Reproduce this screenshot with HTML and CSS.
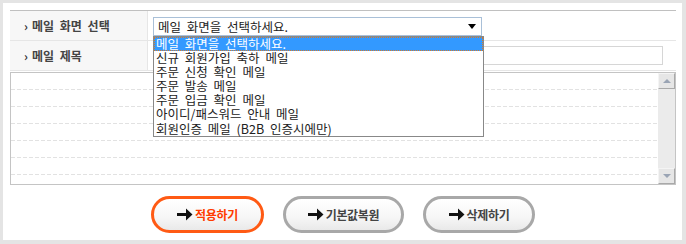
FILE: index.html
```html
<!DOCTYPE html>
<html>
<head>
<title>메일 설정</title>
<link rel="stylesheet" href="styles.css">
</head>
<body>

<div class="frame">
  <div class="form-grid">
    <div class="label"><span class="bullet">›</span>메일 화면 선택</div>
    <div class="value">
      <div class="select">
        <span class="select-text">메일 화면을 선택하세요.</span>
        <span class="select-arrow"></span>
        <ul class="select-list">
          <li class="active">메일 화면을 선택하세요.</li>
          <li>신규 회원가입 축하 메일</li>
          <li>주문 신청 확인 메일</li>
          <li>주문 발송 메일</li>
          <li>주문 입금 확인 메일</li>
          <li>아이디/패스워드 안내 메일</li>
          <li>회원인증 메일 (B2B 인증시에만)</li>
        </ul>
      </div>
    </div>
    <div class="label"><span class="bullet">›</span>메일 제목</div>
    <div class="value">
      <div class="subject"></div>
    </div>
  </div>

  <div class="mail-body">
    <div class="lines">
      <div class="line"></div>
      <div class="line"></div>
      <div class="line"></div>
      <div class="line"></div>
      <div class="line"></div>
      <div class="line"></div>
    </div>
    <div class="scrollbar">
      <div class="scroll-btn"><span class="tri up"></span></div>
      <div class="scroll-btn"><span class="tri down"></span></div>
    </div>
  </div>

  <div class="buttons">
    <div class="btn btn-apply">
      <svg class="arrow" width="16" height="13" viewBox="0 0 16 13"><path d="M0 5h9V0.5l6.5 6-6.5 6V8H0z" fill="#111"/></svg>
      <span>적용하기</span>
    </div>
    <div class="btn btn-reset">
      <svg class="arrow" width="16" height="13" viewBox="0 0 16 13"><path d="M0 5h9V0.5l6.5 6-6.5 6V8H0z" fill="#111"/></svg>
      <span>기본값복원</span>
    </div>
    <div class="btn btn-delete">
      <svg class="arrow" width="16" height="13" viewBox="0 0 16 13"><path d="M0 5h9V0.5l6.5 6-6.5 6V8H0z" fill="#111"/></svg>
      <span>삭제하기</span>
    </div>
  </div>
</div>

</body>
</html>
```

FILE: styles.css
```css
body {
  margin: 0;
  background: #e4e4e4;
  font-family: "Noto Sans CJK KR", "Noto Sans", sans-serif;
  font-size: 12px;
  word-spacing: 3px;
  color: #333;
}

/* white panel */
.frame {
  margin: 3px 4px 0 3px;
  height: 237px;
  background: #fff;
  padding: 7px 6px 0 7px;
  box-sizing: border-box;
}

/* form rows */
.form-grid {
  display: grid;
  grid-template-columns: 138px 1fr;
  border-top: 1px solid #c0c0c0;
}

.label {
  height: 29px;
  border-bottom: 1px solid #e6e6e6;
  border-right: 1px solid #e6e6e6;
  background: #f7f7f7;
  display: flex;
  align-items: center;
  padding-left: 14px;
  font-weight: bold;
  color: #444;
}

.bullet {
  width: 8px;
  font-size: 12px;
  color: #333;
}

.value {
  height: 29px;
  border-bottom: 1px solid #e6e6e6;
  display: flex;
  align-items: center;
  padding-left: 5px;
}

.select {
  position: relative;
  width: 329px;
  height: 19px;
  border: 1px solid #a9c0d8;
  box-sizing: border-box;
  display: flex;
  align-items: center;
  padding-left: 4px;
  margin-top: 1px;
  font-size: 12.5px;
}

.select-text {
  flex: 1;
  color: #222;
}

.select-arrow {
  width: 0;
  height: 0;
  border-left: 4px solid transparent;
  border-right: 4px solid transparent;
  border-top: 5px solid #000;
  margin-right: 5px;
}

/* opened dropdown list */
.select-list {
  position: absolute;
  left: -1px;
  top: 18px;
  width: 329px;
  margin: 0;
  padding: 0;
  list-style: none;
  background: #fff;
  border: 1px solid #888;
  z-index: 5;
}

.select-list li {
  height: 14.2px;
  line-height: 14.2px;
  padding-left: 2px;
  color: #222;
  white-space: nowrap;
}

.select-list li.active {
  background: #3399ff;
  color: #fff;
  outline: 1px dotted #d57a2a;
  outline-offset: -1px;
}

.subject {
  width: 510px;
  height: 19px;
  border: 1px solid #d6d6d6;
  box-sizing: border-box;
}

/* mail body editor */
.mail-body {
  margin-top: 1px;
  height: 113px;
  border: 1px solid #c4c4c4;
  box-sizing: border-box;
  display: flex;
}

.lines {
  flex: 1;
}

.line {
  height: 16px;
  border-bottom: 1px solid transparent;
  position: relative;
}

.line::after {
  content: "";
  position: absolute;
  left: 0;
  right: 0;
  bottom: -1px;
  height: 1px;
  background: repeating-linear-gradient(to right, #e2e2e2 0 4px, transparent 4px 6px);
}

.scrollbar {
  width: 17px;
  background: #ebebeb;
  display: flex;
  flex-direction: column;
  justify-content: space-between;
}

.scroll-btn {
  height: 16px;
  border: 1px solid;
  border-color: #f4f4f4 #a9a9a9 #a9a9a9 #f4f4f4;
  background: #e6e6e6;
  box-sizing: border-box;
  display: flex;
  align-items: center;
  justify-content: center;
}

.tri {
  width: 0;
  height: 0;
  border-left: 4px solid transparent;
  border-right: 4px solid transparent;
}

.tri.up {
  border-bottom: 4px solid #9aa4b4;
}

.tri.down {
  border-top: 4px solid #9aa4b4;
}

/* action buttons */
.buttons {
  display: flex;
  justify-content: center;
  gap: 19px;
  margin-top: 11px;
}

.btn {
  height: 37px;
  border: 3px solid #a8a8a8;
  border-radius: 19px;
  box-sizing: border-box;
  background: linear-gradient(#ffffff, #f6f6f6 60%, #e9e9e9);
  display: flex;
  align-items: center;
  justify-content: center;
  gap: 2px;
  font-weight: bold;
  color: #444;
  letter-spacing: -0.3px;
}

.btn-apply {
  width: 113px;
  border-color: #ff5a14;
  color: #ff3c00;
}

.btn-reset {
  width: 121px;
}

.btn-delete {
  width: 112px;
}

.arrow {
  display: block;
}
```
